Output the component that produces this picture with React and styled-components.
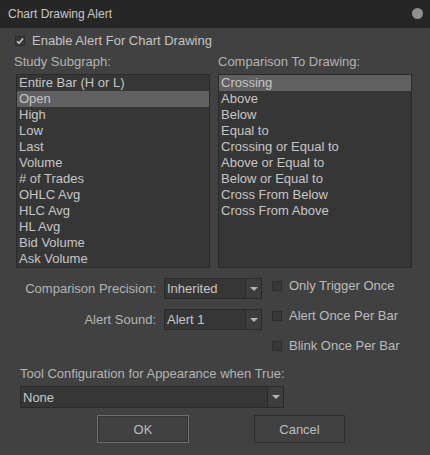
import React from 'react';
import styled, { createGlobalStyle } from 'styled-components';

const GlobalStyle = createGlobalStyle`
  body {
    margin: 0;
    background: #414141;
    font-family: 'Liberation Sans', Arial, sans-serif;
  }
`;

const Window = styled.div`
  width: 430px;
  height: 455px;
  display: flex;
  flex-direction: column;
  background: #414141;
  color: #bcbcbc;
  font-size: 13px;
  overflow: hidden;
`;

const TitleBar = styled.div`
  height: 27px;
  flex: none;
  display: flex;
  align-items: center;
  justify-content: space-between;
  padding: 0 7px 1px 8px;
  background: #262626;
  color: #c8c8c8;
  font-size: 12px;
`;

const CloseDot = styled.span`
  width: 11px;
  height: 11px;
  border-radius: 50%;
  background: #8f8f8f;
`;

const Body = styled.div`
  display: flex;
  flex-direction: column;
`;

const CheckRow = styled.label`
  display: flex;
  align-items: center;
  gap: 7px;
  height: 16px;
  line-height: 16px;
  padding-left: ${p => p.indent || 0}px;
  margin-top: ${p => p.top || 0}px;
  color: ${p => p.color || '#bcbcbc'};
`;

const Box = styled.span`
  width: 8px;
  height: 8px;
  flex: none;
  border: 1px solid #2c2c2c;
  background: #383838;
  display: flex;
  align-items: center;
  justify-content: center;
`;

const Columns = styled.div`
  display: grid;
  grid-template-columns: 194px 194px;
  column-gap: 8px;
  padding-left: 16px;
  margin-top: 5px;
`;

const Column = styled.div`
  display: flex;
  flex-direction: column;
`;

const Caption = styled.div`
  height: 16px;
  line-height: 16px;
  margin: 0 0 4px ${p => p.shift || 0}px;
  color: #b4b4b4;
`;

const ListBox = styled.div`
  height: 192px;
  border: 1px solid #2a2a2a;
  background: #363636;
  display: flex;
  flex-direction: column;
`;

const ListItem = styled.div`
  height: 16px;
  line-height: 16px;
  padding-left: 2px;
  color: #c6c6c6;
  background: ${p => (p.selected ? '#606060' : 'transparent')};
`;

const Options = styled.div`
  display: flex;
  gap: 10px;
  padding-left: 8px;
  margin-top: 10px;
`;

const Fields = styled.div`
  display: grid;
  grid-template-columns: 148px 98px;
  column-gap: 8px;
  row-gap: 10px;
  align-content: start;
  align-items: center;
`;

const FieldLabel = styled.div`
  justify-self: end;
  color: #b4b4b4;
`;

const Select = styled.div`
  height: ${p => p.h || 21}px;
  width: ${p => p.w || 98}px;
  box-sizing: border-box;
  border: 1px solid #2a2a2a;
  background: #363636;
  display: flex;
  align-items: stretch;
`;

const SelectValue = styled.div`
  flex: 1;
  padding-left: 2px;
  display: flex;
  align-items: center;
  color: #c6c6c6;
`;

const DropButton = styled.div`
  width: 16px;
  box-sizing: border-box;
  border-left: 1px solid #2a2a2a;
  background: #3d3d3d;
  display: flex;
  align-items: center;
  justify-content: center;

  &::after {
    content: '';
    border-left: 4px solid transparent;
    border-right: 4px solid transparent;
    border-top: 4px solid #b4b4b4;
  }
`;

const Toggles = styled.div`
  display: flex;
  flex-direction: column;
  gap: 14px;
`;

const SectionLabel = styled.div`
  height: 16px;
  line-height: 16px;
  padding-left: 20px;
  margin-top: 12px;
  color: #b4b4b4;
`;

const WideSelectRow = styled.div`
  padding-left: 20px;
  margin-top: 4px;
`;

const Buttons = styled.div`
  display: flex;
  gap: 65px;
  padding-left: 97px;
  margin-top: 7px;
`;

const Button = styled.button`
  width: ${p => p.w}px;
  height: 28px;
  background: #414141;
  color: #bdbdbd;
  font-family: inherit;
  font-size: 13px;
  border: 1px solid ${p => (p.primary ? '#6e6e6e' : '#2c2c2c')};
  box-shadow: ${p => (p.primary ? 'inset 0 0 0 1px #353535' : 'none')};
  padding: 0;
`;

const subgraphs = [
  'Entire Bar (H or L)', 'Open', 'High', 'Low', 'Last', 'Volume',
  '# of Trades', 'OHLC Avg', 'HLC Avg', 'HL Avg', 'Bid Volume', 'Ask Volume',
];

const comparisons = [
  'Crossing', 'Above', 'Below', 'Equal to', 'Crossing or Equal to',
  'Above or Equal to', 'Below or Equal to', 'Cross From Below', 'Cross From Above',
];

function Check({ checked }) {
  return (
    <Box>
      {checked && (
        <svg width="8" height="8" viewBox="0 0 8 8">
          <path d="M1 4.2 L3.1 6.2 L7 1.6" fill="none" stroke="#d0d0d0" strokeWidth="1.5" />
        </svg>
      )}
    </Box>
  );
}

function Dropdown({ value, w, h }) {
  return (
    <Select w={w} h={h}>
      <SelectValue>{value}</SelectValue>
      <DropButton />
    </Select>
  );
}

export default function App() {
  return (
    <Window>
      <GlobalStyle />
      <TitleBar>
        <span>Chart Drawing Alert</span>
        <CloseDot />
      </TitleBar>
      <Body>
        <CheckRow indent={15} top={5} color="#c4c4c4">
          <Check checked />
          Enable Alert For Chart Drawing
        </CheckRow>
        <Columns>
          <Column>
            <Caption shift={-2}>Study Subgraph:</Caption>
            <ListBox>
              {subgraphs.map(s => (
                <ListItem key={s} selected={s === 'Open'}>{s}</ListItem>
              ))}
            </ListBox>
          </Column>
          <Column>
            <Caption>Comparison To Drawing:</Caption>
            <ListBox>
              {comparisons.map(s => (
                <ListItem key={s} selected={s === 'Crossing'}>{s}</ListItem>
              ))}
            </ListBox>
          </Column>
        </Columns>
        <Options>
          <Fields>
            <FieldLabel>Comparison Precision:</FieldLabel>
            <Dropdown value="Inherited" />
            <FieldLabel>Alert Sound:</FieldLabel>
            <Dropdown value="Alert 1" />
          </Fields>
          <Toggles>
            <CheckRow><Check />Only Trigger Once</CheckRow>
            <CheckRow><Check />Alert Once Per Bar</CheckRow>
            <CheckRow><Check />Blink Once Per Bar</CheckRow>
          </Toggles>
        </Options>
        <SectionLabel>Tool Configuration for Appearance when True:</SectionLabel>
        <WideSelectRow>
          <Dropdown value="None" w={264} h={22} />
        </WideSelectRow>
        <Buttons>
          <Button primary w={92}>OK</Button>
          <Button w={91}>Cancel</Button>
        </Buttons>
      </Body>
    </Window>
  );
}
